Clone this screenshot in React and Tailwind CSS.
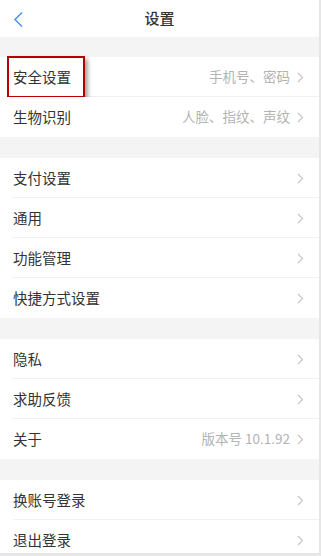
import React from "react";

const groups = [
  [
    { label: "安全设置", value: "手机号、密码", mark: true },
    { label: "生物识别", value: "人脸、指纹、声纹" },
  ],
  [
    { label: "支付设置" },
    { label: "通用" },
    { label: "功能管理" },
    { label: "快捷方式设置" },
  ],
  [
    { label: "隐私" },
    { label: "求助反馈" },
    { label: "关于", value: "版本号 10.1.92" },
  ],
  [{ label: "换账号登录" }, { label: "退出登录" }],
];

const Chevron = () => (
  <svg width="7" height="11" viewBox="0 0 7 11" className="ml-[7px] shrink-0">
    <path d="M1 1l4.5 4.5L1 10" fill="none" stroke="#c4c4c4" strokeWidth="1.1" />
  </svg>
);

const Row = ({ item, last }) => (
  <div className="relative h-10 flex items-center pl-[13px] pr-[15px] bg-white">
    <span className="text-[14.5px] text-[#333] leading-none">{item.label}</span>
    <div className="ml-auto flex items-center">
      {item.value && (
        <span className="text-[13.5px] text-[#b3b3b3] leading-none">{item.value}</span>
      )}
      <Chevron />
    </div>
    {!last && <div className="absolute left-[13px] right-0 bottom-0 h-px bg-[#f0f0f0]" />}
    {item.mark && (
      <div className="absolute left-[7px] top-[-1px] w-[78px] h-[42px] border-2 border-[#b40000] shadow-[3px_3px_4px_rgba(0,0,0,0.35)]" />
    )}
  </div>
);

export default function App() {
  return (
    <div
      className="w-[321px] h-[556px] overflow-hidden bg-[#f4f4f4] border-r-2 border-b-[3px] border-[#e6e6e6]"
      style={{ fontFamily: '"Noto Sans CJK SC", "Noto Sans", sans-serif' }}
    >
      <div className="h-[37px] bg-white relative flex items-center justify-center">
        <svg width="11" height="17" viewBox="0 0 11 17" className="absolute left-[13px] top-[11px]">
          <path d="M9 1.5L2 8.5l7 7" fill="none" stroke="#4f8ef5" strokeWidth="1.5" />
        </svg>
        <span className="text-[15px] font-medium text-[#333]">设置</span>
      </div>
      <div className="flex flex-col gap-[21px] pt-[20px]">
        {groups.map((g, gi) => (
          <div key={gi} className="bg-white">
            {g.map((item, i) => (
              <Row key={i} item={item} last={i === g.length - 1} />
            ))}
          </div>
        ))}
      </div>
    </div>
  );
}
